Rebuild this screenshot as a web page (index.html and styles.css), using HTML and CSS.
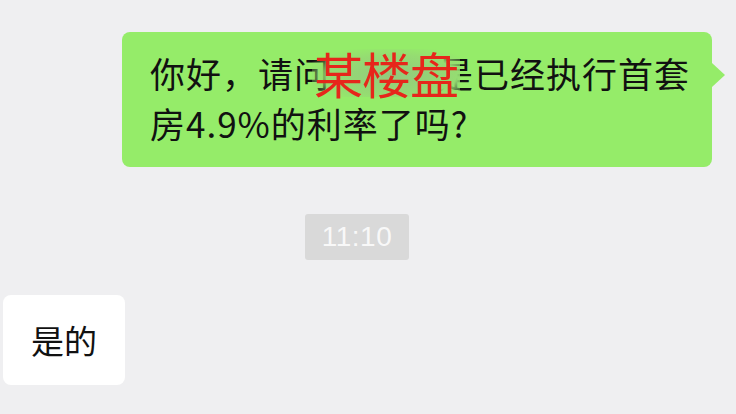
FILE: index.html
```html
<!DOCTYPE html>
<html lang="zh-CN">
<head>
<meta charset="utf-8">
<title>聊天</title>
<link rel="stylesheet" href="styles.css">
</head>
<body>
<div class="chat">
  <div class="row row-right">
    <div class="bubble bubble-me">
      <p class="msg">你好，请问<span class="gap"></span>是已经执行首套<br>房4.9%的利率了吗?</p>
      <span class="mask">某楼盘</span>
    </div>
  </div>
  <div class="row row-time">
    <span class="time">11:10</span>
  </div>
  <div class="row row-left">
    <div class="bubble bubble-other">
      <p class="msg">是的</p>
    </div>
  </div>
</div>
</body>
</html>
```

FILE: styles.css
```css
html, body {
  margin: 0;
  padding: 0;
}
body {
  width: 736px;
  height: 414px;
  overflow: hidden;
  background: #efeff1;
  font-family: "Noto Sans CJK SC", "Noto Sans", sans-serif;
  color: #111111;
}
.chat {
  display: flex;
  flex-direction: column;
  padding-top: 32px;
}
.row {
  display: flex;
}
.row-right {
  justify-content: flex-end;
  padding-right: 24px;
}
.bubble {
  position: relative;
  box-sizing: border-box;
  border-radius: 8px;
}
.msg {
  margin: 0;
  white-space: nowrap;
}
.bubble-me {
  width: 590px;
  height: 135px;
  background: #95ec69;
  padding: 16px 20px 0 28px;
}
.bubble-me .msg {
  font-size: 35px;
  line-height: 50px;
  letter-spacing: 1px;
}
.gap {
  display: inline-block;
  width: 108px;
  height: 1px;
}
.bubble-me::after {
  content: "";
  position: absolute;
  right: -13px;
  top: 31px;
  border-style: solid;
  border-width: 12px 0 12px 13px;
  border-color: transparent transparent transparent #95ec69;
}
.mask {
  position: absolute;
  left: 190px;
  top: 17px;
  font-size: 49px;
  line-height: 48px;
  letter-spacing: -1px;
  color: #e6261b;
  background: radial-gradient(ellipse at 55% 55%, #93c87e 0%, #95dc72 55%, rgba(149, 236, 105, 0) 80%);
  padding: 0 2px;
}
.row-time {
  justify-content: center;
  padding-right: 22px;
  margin-top: 47px;
}
.time {
  display: flex;
  align-items: center;
  justify-content: center;
  width: 104px;
  height: 46px;
  background: #d9d9d9;
  border-radius: 3px;
  color: #f8f8f8;
  font-family: "Liberation Sans", "Noto Sans", sans-serif;
  font-size: 28px;
  letter-spacing: 0.5px;
}
.row-left {
  margin-top: 35px;
  padding-left: 3px;
}
.bubble-other {
  width: 122px;
  height: 90px;
  background: #ffffff;
  display: flex;
  align-items: center;
  justify-content: center;
}
.bubble-other .msg {
  font-size: 33px;
  line-height: 40px;
}
```
